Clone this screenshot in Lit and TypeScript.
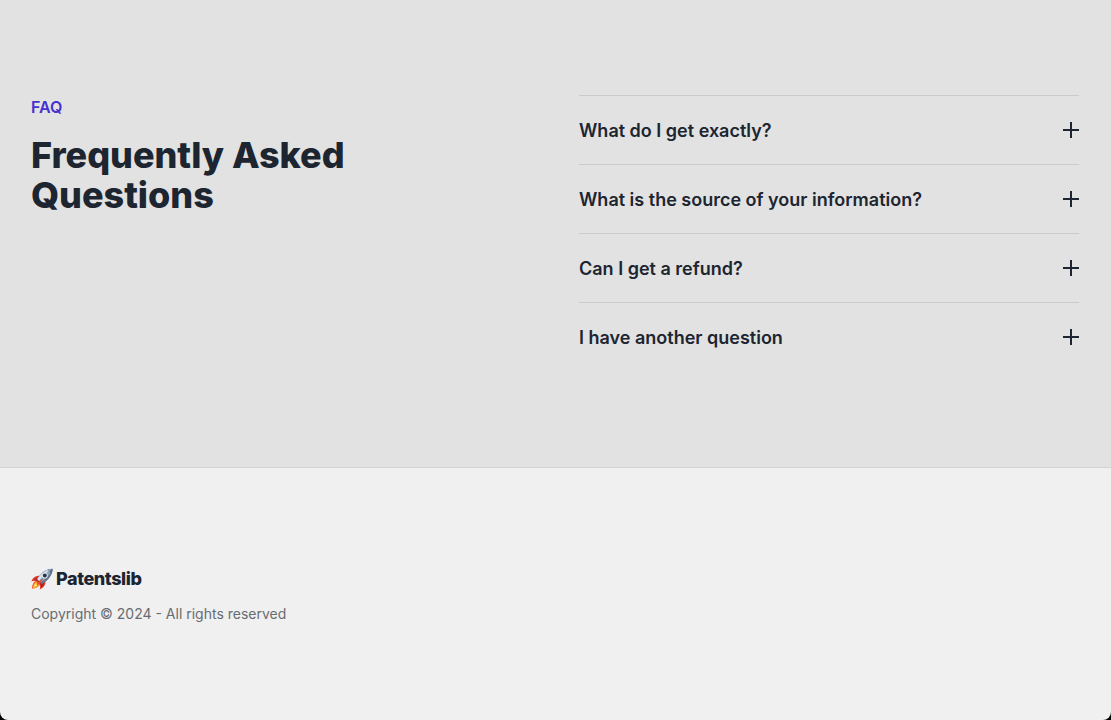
import { LitElement, html, css, svg } from 'lit';
import { customElement, property, state } from 'lit/decorators.js';

@customElement('faq-item')
export class FaqItem extends LitElement {

    static styles = css`
    :host {
      display: block;
    }

    button {
      display: flex;
      align-items: center;
      width: 100%;
      padding: 20px 0;
      border: 0;
      border-top: 1px solid #cbcbcb;
      background: none;
      color: #1c2530;
      font: 600 18px/28px Inter, sans-serif;
      text-align: left;
      cursor: pointer;
    }

    .question {
      flex: 1;
      padding-top: 1px;
      margin-bottom: -1px;
    }

    svg {
      width: 16px;
      height: 16px;
      fill: currentColor;
    }

    .answer {
      padding-bottom: 20px;
      color: #5f646c;
      font: 400 16px/26px Inter, sans-serif;
    }
  `;

    @property() question = '';
    @state() open = false;

    render() {
        return html`
      <button aria-expanded=${this.open} @click=${() => { this.open = !this.open; }}>
        <span class="question">${this.question}</span>
        <svg viewBox="0 0 16 16">
          <rect y="7" width="16" height="2" />
          ${this.open ? '' : svg`<rect x="7" width="2" height="16" />`}
        </svg>
      </button>
      ${this.open ? html`<div class="answer"><slot></slot></div>` : ''}
    `;
    }
}

@customElement('app-root')
export class AppRoot extends LitElement {

    static styles = css`
    :host {
      display: block;
      background: #000;
      font-family: Inter, sans-serif;
      color: #1c2530;
    }

    .page {
      display: flex;
      flex-direction: column;
      height: 720px;
      overflow: hidden;
      border-radius: 0 0 8px 8px;
      background: #f0f0f0;
    }

    .faq {
      display: flex;
      gap: 48px;
      box-sizing: border-box;
      height: 467px;
      padding: 95px 32px 96px 31px;
      background: #e2e2e2;
    }

    .intro,
    .list {
      flex: 1;
    }

    .label {
      margin: 0 0 16px;
      color: #4630cf;
      font-size: 16px;
      font-weight: 600;
      line-height: 24px;
    }

    h2 {
      margin: 0;
      font-size: 36px;
      font-weight: 800;
      line-height: 40px;
      letter-spacing: -0.03px;
    }

    footer {
      flex: 1;
      padding: 97px 31px;
      border-top: 1px solid #d4d4d4;
    }

    .brand {
      display: flex;
      align-items: center;
      gap: 3px;
      font-size: 18px;
      font-weight: 800;
      line-height: 28px;
      letter-spacing: -0.42px;
    }

    .brand svg {
      width: 22px;
      height: 22px;
    }

    .copyright {
      margin: 11px 0 0;
      color: #686c72;
      font-size: 14px;
      line-height: 20px;
    }
  `;

    questions = [
        'What do I get exactly?',
        'What is the source of your information?',
        'Can I get a refund?',
        'I have another question'
    ];

    render() {
        return html`
      <div class="page">
        <section class="faq">
          <div class="intro">
            <p class="label">FAQ</p>
            <h2>Frequently Asked Questions</h2>
          </div>
          <div class="list">
            ${this.questions.map(q => html`<faq-item question=${q}></faq-item>`)}
          </div>
        </section>

        <footer>
          <div class="brand">${this.rocket()}<span>Patentslib</span></div>
          <p class="copyright">Copyright © 2024 - All rights reserved</p>
        </footer>
      </div>
    `;
    }

    rocket() {
        return html`
      <svg viewBox="0 0 22 22">
        <!-- fins -->
        <path fill="#e2382a" d="M8.8 8C5 7.2 2 9.4.3 13.6c2-1 3.6-1 5.4-.4zM14.4 13c.4 3.8-1.6 6.6-5.8 8.6.8-2.2.6-3.6 0-5.4z" />
        <path fill="#a81f20" d="M8.2 9.4c-2.2 0-4 1-5.4 2.8l2.8.2zM13.2 14.2c0 2.2-1 4-3 5.4l-.6-3.2z" />
        <!-- exhaust -->
        <path fill="#ee5a24" d="M5.4 12.6C2.4 14 1.2 16.6.8 20.8c4.2-.4 7.4-2 8.4-4.8z" />
        <path fill="#ffb52e" d="M5.2 14C3 15.2 2.2 17.2 1.6 20.2c3.4-.6 5.6-1.8 6.4-3.8z" />
        <path fill="#fff08a" d="M5 15.4c-1.4 1-1.9 2-2.3 3.4 1.6-.4 2.9-1 3.7-2.2z" />
        <!-- body -->
        <path fill="#91a5ba" d="M21.6.8C15.6.8 10 4 5.6 11.6l4.8 4.6C17.6 12.2 21.6 7 21.6.8z" />
        <path fill="#dce5ed" d="M19.6 1.4C14.4 2.4 9.8 5.6 6.2 11.6l1.6 1.6C11.4 8 15 4.6 19.6 1.4z" />
        <path fill="#60758b" d="M21.6.8c-.2 6.2-4 11.4-11.2 15.4l-1.4-1.4C15.4 11 19 6.8 21.6.8z" />
        <path fill="#5b7087" d="M21.6.8c-1.8 0-3.4.3-5 .9l3.9 4c.7-1.5 1.1-3.1 1.1-4.9z" />
        <path fill="#b4c5d4" d="M20.8 1.2c-1.4.1-2.5.3-3.6.7l1 1z" />
        <circle cx="13.8" cy="7.6" r="2.9" fill="#e6edf3" />
        <circle cx="13.8" cy="7.6" r="2" fill="#26354a" />
        <path fill="#b62c25" d="m5.9 11 5 4.8-1.4.8-4.4-4.2z" />
        <path fill="#ee4632" d="m10.8 10.8 1 1-5.4 5.4-1-1z" />
      </svg>
    `;
    }
}
